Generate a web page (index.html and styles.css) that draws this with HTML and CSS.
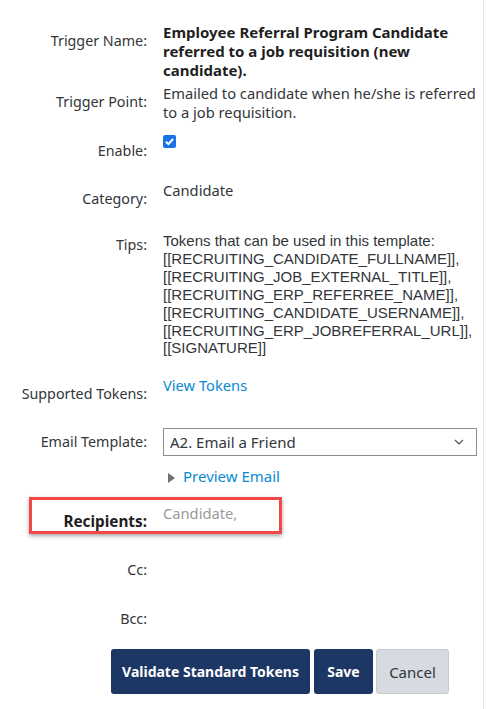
FILE: index.html
```html
<!DOCTYPE html>
<html>
<head>
<meta charset="utf-8">
<link rel="stylesheet" href="styles.css">
</head>
<body>
<div class="page">
  <div class="form">
    <div class="row r-name">
      <div class="label">Trigger Name:</div>
      <div class="value bold">Employee Referral Program Candidate referred to a job requisition (new candidate).</div>
    </div>
    <div class="row r-point">
      <div class="label">Trigger Point:</div>
      <div class="value">Emailed to candidate when he/she is referred to a job requisition.</div>
    </div>
    <div class="row r-enable">
      <div class="label">Enable:</div>
      <div class="value"><span class="check"><svg width="13" height="13" viewBox="0 0 13 13"><path d="M3 6.8 L5.4 9.1 L10 4" fill="none" stroke="#fff" stroke-width="2"/></svg></span></div>
    </div>
    <div class="row r-cat">
      <div class="label">Category:</div>
      <div class="value">Candidate</div>
    </div>
    <div class="row r-tips">
      <div class="label">Tips:</div>
      <div class="value tips">Tokens that can be used in this template:<br>[[RECRUITING_CANDIDATE_FULLNAME]],<br>[[RECRUITING_JOB_EXTERNAL_TITLE]],<br>[[RECRUITING_ERP_REFERREE_NAME]],<br>[[RECRUITING_CANDIDATE_USERNAME]],<br>[[RECRUITING_ERP_JOBREFERRAL_URL]],<br>[[SIGNATURE]]</div>
    </div>
    <div class="row r-tokens">
      <div class="label">Supported Tokens:</div>
      <div class="value"><a class="link">View Tokens</a></div>
    </div>
    <div class="row r-template">
      <div class="label">Email Template:</div>
      <div class="value">
        <div class="select"><span>A2. Email a Friend</span><svg width="10" height="6" viewBox="0 0 10 6"><path d="M1 1 L5 5 L9 1" fill="none" stroke="#555" stroke-width="1.2"/></svg></div>
      </div>
    </div>
    <div class="row r-preview">
      <div class="label"></div>
      <div class="value preview"><span class="tri"></span><a class="link">Preview Email</a></div>
    </div>
    <div class="row r-recip">
      <div class="label bold">Recipients:</div>
      <div class="value muted">Candidate,</div>
      <div class="highlight"></div>
    </div>
    <div class="row r-cc">
      <div class="label">Cc:</div>
      <div class="value"></div>
    </div>
    <div class="row r-bcc">
      <div class="label">Bcc:</div>
      <div class="value"></div>
    </div>
    <div class="buttons">
      <button class="btn primary wide">Validate Standard Tokens</button>
      <button class="btn primary">Save</button>
      <button class="btn secondary">Cancel</button>
    </div>
  </div>
</div>
</body>
</html>
```
FILE: styles.css
```css
html, body {
  margin: 0;
  padding: 0;
  background: #fff;
}
body {
  font-family: "Noto Sans", "Open Sans", sans-serif;
  color: #32363a;
  font-size: 14px;
}
.page {
  width: 484px;
  min-height: 709px;
  border-right: 1px solid #e6e6e6;
  box-sizing: border-box;
}
.form {
  padding-top: 23px;
  display: flex;
  flex-direction: column;
}
.row {
  display: flex;
  position: relative;
}
.label {
  width: 147px;
  flex: none;
  text-align: right;
  padding-top: 8px;
  line-height: 19px;
  font-size: 14.3px;
  white-space: nowrap;
}
.value {
  margin-left: 16px;
  line-height: 19px;
  width: 314px;
  font-size: 14.7px;
}
.bold { font-weight: bold; color: #1f1f1f; }
.value.bold { font-size: 15px; }
.label.bold { font-size: 15.3px; }
.r-point { margin-top: 4px; }
.r-enable { margin-top: 11px; }
.r-enable .label { padding-top: 8px; }
.check {
  display: inline-block;
  width: 13px;
  height: 13px;
  background: #1a73e8;
  border-radius: 2px;
  margin-top: 1px;
}
.check svg { display: block; }
.r-cat { margin-top: 21px; }
.r-tips { margin-top: 24px; }
.r-tips .label { padding-top: 3px; }
.tips {
  font-family: "Liberation Sans", Arial, sans-serif;
  font-size: 15px;
  line-height: 17.9px;
}
.r-tokens { margin-top: 19px; }
.link { color: #0a8bd0; text-decoration: none; }
.r-template { margin-top: 25px; }
.r-template .label { padding-top: 4px; }
.select {
  width: 314px;
  height: 28px;
  box-sizing: border-box;
  border: 1px solid #8a8f96;
  display: flex;
  align-items: center;
  justify-content: space-between;
  padding: 0 12px 0 6px;
  font-size: 15px;
}
.r-preview { margin-top: 11px; }
.r-preview .label { padding-top: 0; }
.preview { display: flex; align-items: center; font-size: 15px; }
.tri {
  width: 0; height: 0;
  border-left: 7px solid #707070;
  border-top: 5px solid transparent;
  border-bottom: 5px solid transparent;
  margin-left: 5px;
  margin-right: 8px;
  margin-top: 2px;
}
.r-recip { margin-top: 18px; }
.r-recip .label { color: #1f1f1f; }
.muted { color: #9a9a9a; }
.highlight {
  position: absolute;
  left: 29px;
  top: -7px;
  width: 253px;
  height: 37px;
  box-sizing: border-box;
  border: 3px solid #f24848;
  box-shadow: 0 2px 4px rgba(0,0,0,0.35);
}
.r-cc { margin-top: 21px; }
.r-bcc { margin-top: 22px; }
.buttons {
  display: flex;
  gap: 3px;
  margin-left: 111px;
  margin-top: 21px;
}
.btn {
  height: 45px;
  border-radius: 3px;
  font-family: "Noto Sans", sans-serif;
  font-size: 14px;
  padding: 0;
}
.primary {
  background: #1d3765;
  color: #fff;
  border: none;
  font-weight: bold;
  width: 59px;
}
.primary.wide { width: 199px; margin-right: 1px; }
.secondary {
  background: #d5dbe1;
  border: 1px solid #c4cbd2;
  color: #32363a;
  width: 73px;
  font-size: 15px;
}
```
